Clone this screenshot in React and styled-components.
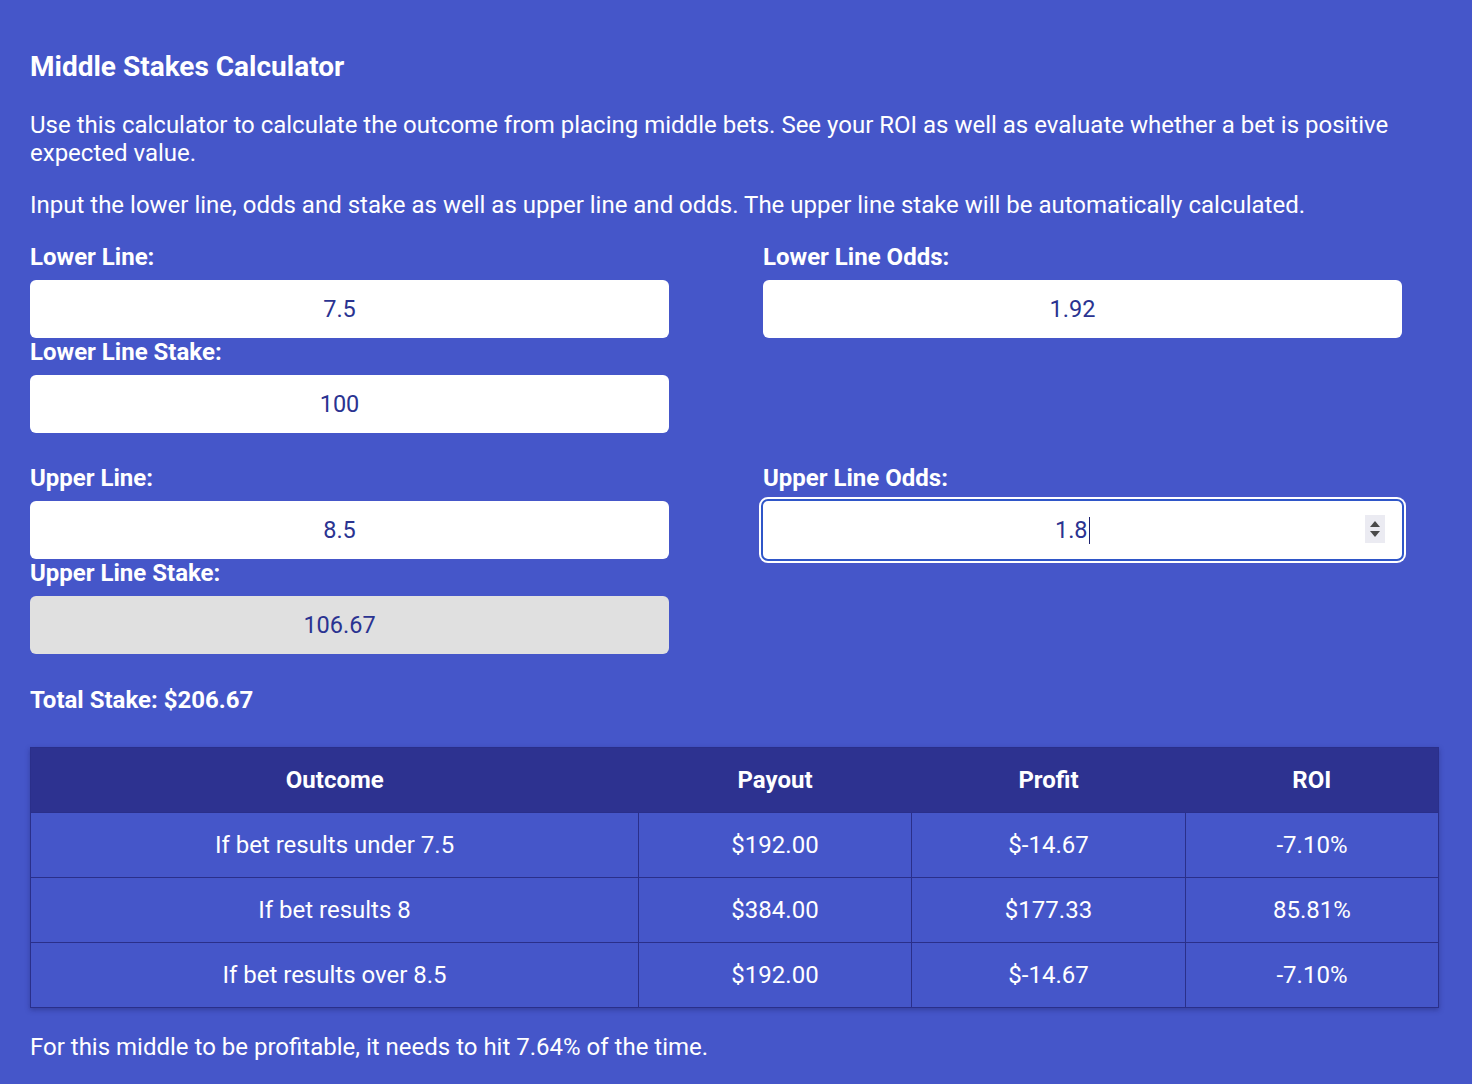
import React from "react";
import styled, { createGlobalStyle } from "styled-components";

const Global = createGlobalStyle`
  html, body { margin: 0; padding: 0; background: #4556c9; }
  body { font-family: Roboto, "Noto Sans", sans-serif; color: #ffffff; }
  * { box-sizing: border-box; }
`;

const Page = styled.div`
  min-height: 1084px;
  background: #4556c9;
  padding: 50px 34px 30px 30px;
`;

const Title = styled.h2`
  margin: 0 0 27px;
  font-size: 28px;
  line-height: 34px;
  font-weight: 700;
`;

const Para = styled.p`
  margin: 0 0 24px;
  font-size: 24px;
  line-height: 28px;
  font-weight: 400;
`;

const Section = styled.div`
  display: grid;
  grid-template-columns: 733px 1fr;
  margin-top: ${(p) => p.$top}px;
`;

const Column = styled.div`
  display: flex;
  flex-direction: column;
`;

const Field = styled.div`
  display: flex;
  flex-direction: column;
`;

const Label = styled.label`
  display: block;
  font-size: 24px;
  line-height: 28px;
  font-weight: 700;
  margin-bottom: 9px;
`;

const Input = styled.input`
  width: 639px;
  height: 58px;
  border: none;
  border-radius: 6px;
  background: ${(p) => (p.disabled ? "#e0e0e0" : "#ffffff")};
  color: #2a3391;
  -webkit-text-fill-color: #2a3391;
  font-family: Roboto, sans-serif;
  font-size: 23.5px;
  text-align: center;
  outline: none;
  padding: 0 30px 0 10px;
  opacity: 1;
`;

const FocusedBox = styled.div`
  position: relative;
  width: 643px;
  height: 62px;
  margin: -2px 0 0 -2px;
  padding: 0 32px 0 12px;
  border: 2px solid #2f56c8;
  border-radius: 7px;
  box-shadow: 0 0 0 2px #ffffff;
  background: #ffffff;
  display: flex;
  align-items: center;
  justify-content: center;
  color: #2a3391;
  font-size: 23.5px;
`;

const Caret = styled.span`
  display: inline-block;
  width: 1.5px;
  height: 27px;
  background: #1d2270;
  margin-left: 1px;
`;

const Spinner = styled.div`
  position: absolute;
  right: 17px;
  top: 14px;
  width: 20px;
  height: 28px;
  background: #ebebf2;
  display: flex;
  flex-direction: column;
  align-items: center;
  justify-content: center;
  gap: 4px;
`;

const Tri = styled.span`
  width: 0;
  height: 0;
  border-left: 5px solid transparent;
  border-right: 5px solid transparent;
  ${(p) =>
    p.$up
      ? "border-bottom: 6px solid #4a4a4a;"
      : "border-top: 6px solid #4a4a4a;"}
`;

const Total = styled.div`
  margin-top: 32px;
  font-size: 24px;
  line-height: 28px;
  font-weight: 700;
`;

const Table = styled.table`
  margin-top: 33px;
  width: 1408px;
  border-collapse: collapse;
  table-layout: fixed;
  box-shadow: 0 2px 5px rgba(20, 20, 80, 0.35);
  border: 1px solid #2a2f8a;
`;

const Th = styled.th`
  background: #2d3290;
  height: 65px;
  font-size: 24px;
  font-weight: 700;
  text-align: center;
  padding: 0;
`;

const Td = styled.td`
  height: 65px;
  font-size: 24px;
  font-weight: 400;
  text-align: center;
  border: 1px solid #2a2f8a;
  padding: 0;
`;

const Footer = styled.p`
  margin: 25px 0 0;
  font-size: 24px;
  line-height: 28px;
`;

const rows = [
  ["If bet results under 7.5", "$192.00", "$-14.67", "-7.10%"],
  ["If bet results 8", "$384.00", "$177.33", "85.81%"],
  ["If bet results over 8.5", "$192.00", "$-14.67", "-7.10%"],
];

export default function App() {
  return (
    <Page>
      <Global />
      <Title>Middle Stakes Calculator</Title>
      <Para>
        Use this calculator to calculate the outcome from placing middle bets.
        See your ROI as well as evaluate whether a bet is positive expected
        value.
      </Para>
      <Para>
        Input the lower line, odds and stake as well as upper line and odds.
        The upper line stake will be automatically calculated.
      </Para>

      <Section $top={0}>
        <Column>
          <Field>
            <Label>Lower Line:</Label>
            <Input readOnly value="7.5" />
          </Field>
          <Field>
            <Label>Lower Line Stake:</Label>
            <Input readOnly value="100" />
          </Field>
        </Column>
        <Column>
          <Field>
            <Label>Lower Line Odds:</Label>
            <Input readOnly value="1.92" />
          </Field>
        </Column>
      </Section>

      <Section $top={31}>
        <Column>
          <Field>
            <Label>Upper Line:</Label>
            <Input readOnly value="8.5" />
          </Field>
          <Field>
            <Label>Upper Line Stake:</Label>
            <Input disabled value="106.67" />
          </Field>
        </Column>
        <Column>
          <Field>
            <Label>Upper Line Odds:</Label>
            <FocusedBox>
              <span>1.8</span>
              <Caret />
              <Spinner>
                <Tri $up />
                <Tri />
              </Spinner>
            </FocusedBox>
          </Field>
        </Column>
      </Section>

      <Total>Total Stake: $206.67</Total>

      <Table>
        <colgroup>
          <col style={{ width: 608 }} />
          <col style={{ width: 273 }} />
          <col style={{ width: 274 }} />
          <col style={{ width: 253 }} />
        </colgroup>
        <thead>
          <tr>
            <Th>Outcome</Th>
            <Th>Payout</Th>
            <Th>Profit</Th>
            <Th>ROI</Th>
          </tr>
        </thead>
        <tbody>
          {rows.map((r, i) => (
            <tr key={i}>
              {r.map((c, j) => (
                <Td key={j}>{c}</Td>
              ))}
            </tr>
          ))}
        </tbody>
      </Table>

      <Footer>
        For this middle to be profitable, it needs to hit 7.64% of the time.
      </Footer>
    </Page>
  );
}
